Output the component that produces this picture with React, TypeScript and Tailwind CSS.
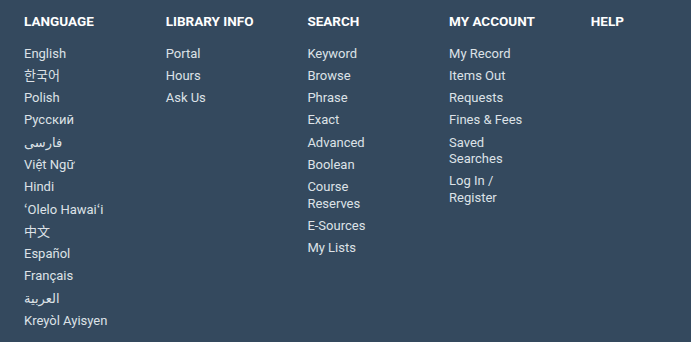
import React from 'react';

const columns: { title: string; links: string[] }[] = [
  {
    title: 'Language',
    links: [
      'English',
      '한국어',
      'Polish',
      'Русский',
      'فارسی',
      'Việt Ngữ',
      'Hindi',
      'ʻOlelo Hawaiʻi',
      '中文',
      'Español',
      'Français',
      'العربية',
      'Kreyòl Ayisyen',
    ],
  },
  { title: 'Library Info', links: ['Portal', 'Hours', 'Ask Us'] },
  {
    title: 'Search',
    links: ['Keyword', 'Browse', 'Phrase', 'Exact', 'Advanced', 'Boolean', 'Course Reserves', 'E-Sources', 'My Lists'],
  },
  {
    title: 'My Account',
    links: ['My Record', 'Items Out', 'Requests', 'Fines & Fees', 'Saved Searches', 'Log In / Register'],
  },
  { title: 'Help', links: [] },
];

export default function App() {
  return (
    <footer className="min-h-screen bg-[#34495e] pl-6 pt-[11px] pb-3 font-['Roboto','Noto_Sans_CJK_SC','DejaVu_Sans',sans-serif]">
      <div className="grid grid-cols-[repeat(4,141.7px)_1fr]">
        {columns.map((col) => (
          <div key={col.title} className="pr-[52px]">
            <h3 className="text-[13.5px] leading-[20px] font-bold uppercase text-white">{col.title}</h3>
            <ul className="mt-[14.5px] flex flex-col gap-[5.8px] text-[13px] leading-[16.5px] text-[#dde2e7]">
              {col.links.map((link) => (
                <li key={link}>
                  <a href="#" className="hover:underline">
                    {link}
                  </a>
                </li>
              ))}
            </ul>
          </div>
        ))}
      </div>
    </footer>
  );
}
